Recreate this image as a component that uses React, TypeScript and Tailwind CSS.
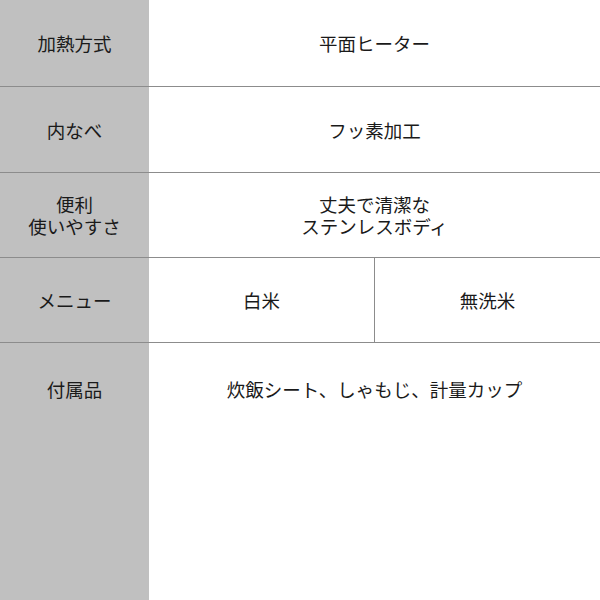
import React from 'react';

const rows: { label: string[]; values: string[][]; h: string }[] = [
  { label: ['加熱方式'], values: [['平面ヒーター']], h: 'h-[87px]' },
  { label: ['内なべ'], values: [['フッ素加工']], h: 'h-[86px]' },
  { label: ['便利', '使いやすさ'], values: [['丈夫で清潔な', 'ステンレスボディ']], h: 'h-[85px]' },
  { label: ['メニュー'], values: [['白米'], ['無洗米']], h: 'h-[85px]' },
];

const Lines = ({ lines }: { lines: string[] }) => (
  <div className="text-center leading-[22px]">
    {lines.map((l) => (
      <div key={l}>{l}</div>
    ))}
  </div>
);

export default function App() {
  return (
    <div
      className="w-[600px] h-[600px] bg-white text-[18.5px] text-[#1a1a1a] flex flex-col"
      style={{ fontFamily: '"Noto Sans CJK JP", "Noto Sans", sans-serif' }}
    >
      {rows.map((row, i) => (
        <div key={i} className={`flex border-b border-[#8c8c8c] ${row.h}`}>
          <div className="w-[149px] bg-[#c0c0c0] flex items-center justify-center">
            <Lines lines={row.label} />
          </div>
          <div className="flex-1 flex">
            {row.values.map((v, j) => (
              <div
                key={j}
                className={`flex-1 flex items-center justify-center ${j > 0 ? 'border-l border-[#8c8c8c]' : ''}`}
              >
                <Lines lines={v} />
              </div>
            ))}
          </div>
        </div>
      ))}
      {/* last row runs to the bottom */}
      <div className="flex flex-1">
        <div className="w-[149px] bg-[#c0c0c0] flex justify-center">
          <div className="h-[94px] flex items-center">付属品</div>
        </div>
        <div className="flex-1 flex justify-center">
          <div className="h-[94px] flex items-center">炊飯シート、しゃもじ、計量カップ</div>
        </div>
      </div>
    </div>
  );
}
